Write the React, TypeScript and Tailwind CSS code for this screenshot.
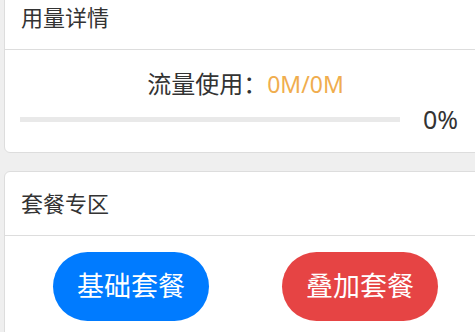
export default function App() {
  const font = { fontFamily: '"Noto Sans", "Noto Sans CJK SC", sans-serif' };
  return (
    <div className="w-[475px] h-[332px] overflow-hidden bg-[#efefef]" style={font}>
      <div className="ml-[4px] w-[483px] mt-[-15px] flex flex-col">
        <div className="bg-white border border-[#dddddd] rounded-[6px] flex flex-col">
          <div className="h-[64px] flex items-center pl-[16px] text-[22px] text-[#333333] border-b border-[#dddddd]">
            用量详情
          </div>
          <div className="flex flex-col pt-[19px] pb-[18px]">
            <div className="flex justify-center items-center text-[24px] leading-[30px] text-[#333333]">
              <span>流量使用：</span>
              <span className="text-[#f0ad4e] text-[23px]">0M/0M</span>
            </div>
            <div className="flex items-center mt-[5px] pl-[15px]">
              <div className="w-[380px] h-[5px] bg-[#e9e9e9]" />
              <span className="ml-[23px] text-[25px] leading-[30px] text-[#333333]">0%</span>
            </div>
          </div>
        </div>
        <div className="mt-[18px] bg-white border border-[#dddddd] rounded-[6px] flex flex-col h-[200px]">
          <div className="h-[64px] flex items-center pl-[16px] text-[22px] text-[#333333] border-b border-[#dddddd]">
            套餐专区
          </div>
          <div className="flex justify-center gap-[73px] pt-[16px]">
            <button className="w-[156px] h-[69px] rounded-full bg-[#007bff] text-white text-[27px] flex items-center justify-center">
              基础套餐
            </button>
            <button className="w-[156px] h-[69px] rounded-full bg-[#e64444] text-white text-[27px] flex items-center justify-center">
              叠加套餐
            </button>
          </div>
        </div>
      </div>
    </div>
  );
}
